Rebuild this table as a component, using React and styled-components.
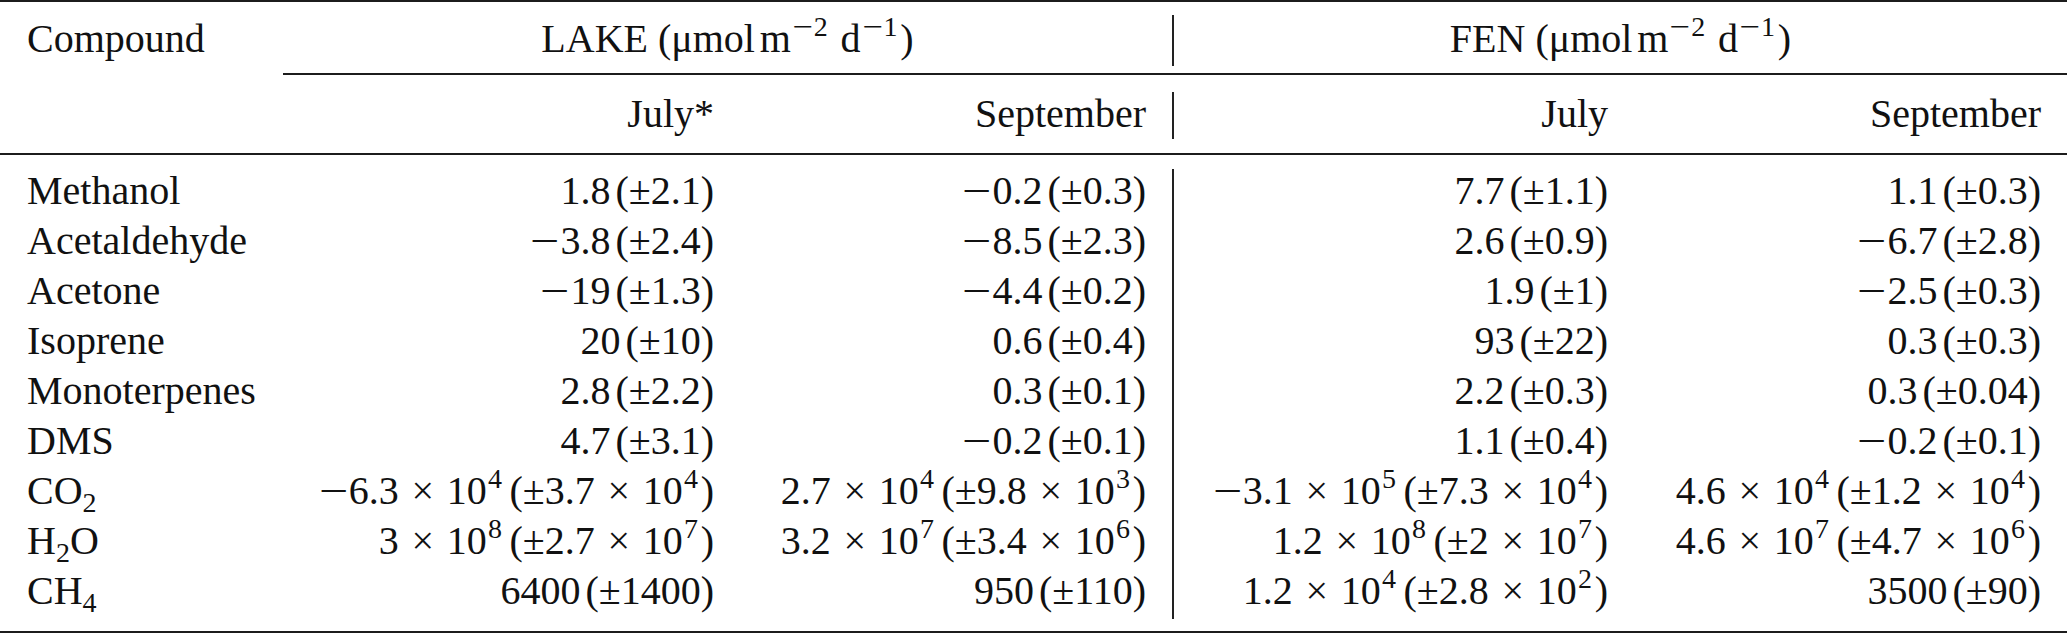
import React from "react";
import styled, { createGlobalStyle } from "styled-components";

const Global = createGlobalStyle`
  html, body { margin: 0; padding: 0; background: #fff; overflow: hidden; }
  body { font-family: "Liberation Serif", serif; color: #111; }
`;

const COLS = "283px 457px 432px 2px 460px 433px";

const Table = styled.div`
  width: 2067px;
  display: flex;
  flex-direction: column;
  font-family: "Liberation Serif", serif;
  font-size: 40px;
  line-height: 50px;
  color: #111;
`;

const Rule = styled.div`
  height: ${(p) => p.$h || 2}px;
  background: #1c1c1c;
  margin-left: ${(p) => p.$indent || 0}px;
`;

const HeadRow = styled.div`
  display: grid;
  grid-template-columns: ${COLS};
  height: ${(p) => p.$height}px;
  padding-top: ${(p) => p.$pt}px;
  box-sizing: border-box;
`;

const Body = styled.div`
  display: grid;
  grid-template-columns: ${COLS};
  grid-auto-rows: 50px;
  padding: 11px 0 15px;
`;

const NameCell = styled.div`
  padding-left: 27px;
  white-space: nowrap;
`;

const NumCell = styled.div`
  text-align: right;
  padding-right: 26px;
  white-space: nowrap;
`;

const SpanHead = styled.div`
  grid-column: ${(p) => p.$cols};
  text-align: center;
  white-space: nowrap;
`;

const Divider = styled.div`
  grid-column: 4;
  grid-row: ${(p) => p.$rows || "auto"};
  background: #222;
  margin-top: ${(p) => p.$mt}px;
  margin-bottom: ${(p) => p.$mb}px;
`;

const Sup = styled.span`
  font-size: 0.7em;
  vertical-align: 0.58em;
  line-height: 0;
  margin-left: 0.04em;
  margin-right: 0.1em;
`;

const Sub = styled.span`
  font-size: 0.7em;
  vertical-align: -0.3em;
  line-height: 0;
`;

const Gap = styled.span`
  display: inline-block;
  width: ${(p) => p.$w}em;
`;

const Minus = styled.span`
  display: inline-block;
  width: 0.78em;
  text-align: center;
  transform: scaleX(1.3);
`;

const Times = styled.span`
  display: inline-block;
  width: 1.2em;
  text-align: center;
`;

function Rich({ text }) {
  const parts = text.split(/(\^[\u2212\d]+|_\d+|~|\u2212|×)/);
  return (
    <>
      {parts.map((p, i) => {
        if (p === "~") return <Gap key={i} $w={0.12} />;
        if (p === "\u2212") return <Minus key={i}>{"\u2212"}</Minus>;
        if (p === "×") return <Times key={i}>×</Times>;
        if (p.startsWith("^")) {
          const s = p.slice(1);
          return (
            <Sup key={i}>
              {s.startsWith("\u2212") ? (
                <>
                  <Minus>{"\u2212"}</Minus>
                  {s.slice(1)}
                </>
              ) : (
                s
              )}
            </Sup>
          );
        }
        if (p.startsWith("_")) return <Sub key={i}>{p.slice(1)}</Sub>;
        return <React.Fragment key={i}>{p}</React.Fragment>;
      })}
    </>
  );
}

const M = "\u2212";

const rows = [
  ["Methanol", `1.8~(±2.1)`, `${M}0.2~(±0.3)`, `7.7~(±1.1)`, `1.1~(±0.3)`],
  ["Acetaldehyde", `${M}3.8~(±2.4)`, `${M}8.5~(±2.3)`, `2.6~(±0.9)`, `${M}6.7~(±2.8)`],
  ["Acetone", `${M}19~(±1.3)`, `${M}4.4~(±0.2)`, `1.9~(±1)`, `${M}2.5~(±0.3)`],
  ["Isoprene", `20~(±10)`, `0.6~(±0.4)`, `93~(±22)`, `0.3~(±0.3)`],
  ["Monoterpenes", `2.8~(±2.2)`, `0.3~(±0.1)`, `2.2~(±0.3)`, `0.3~(±0.04)`],
  ["DMS", `4.7~(±3.1)`, `${M}0.2~(±0.1)`, `1.1~(±0.4)`, `${M}0.2~(±0.1)`],
  ["CO_2", `${M}6.3×10^4~(±3.7×10^4)`, `2.7×10^4~(±9.8×10^3)`, `${M}3.1×10^5~(±7.3×10^4)`, `4.6×10^4~(±1.2×10^4)`],
  ["H_2O", `3×10^8~(±2.7×10^7)`, `3.2×10^7~(±3.4×10^6)`, `1.2×10^8~(±2×10^7)`, `4.6×10^7~(±4.7×10^6)`],
  ["CH_4", `6400~(±1400)`, `950~(±110)`, `1.2×10^4~(±2.8×10^2)`, `3500~(±90)`],
];

export default function App() {
  const unit = ` (μmol~m^${M}2 d^${M}1)`;
  return (
    <>
      <Global />
      <Table>
        <Rule $h={2} />
        <HeadRow $height={71} $pt={12}>
          <NameCell>Compound</NameCell>
          <SpanHead $cols="2 / 4">
            <Rich text={`LAKE${unit}`} />
          </SpanHead>
          <Divider $mt={1} $mb={7} />
          <SpanHead $cols="5 / 7">
            <Rich text={`FEN${unit}`} />
          </SpanHead>
        </HeadRow>
        <Rule $h={2} $indent={283} />
        <HeadRow $height={78} $pt={14}>
          <NameCell />
          <NumCell>July*</NumCell>
          <NumCell>September</NumCell>
          <Divider $mt={3} $mb={14} />
          <NumCell>July</NumCell>
          <NumCell>September</NumCell>
        </HeadRow>
        <Rule $h={2} />
        <Body>
          {rows.map((r, i) => (
            <React.Fragment key={r[0]}>
              <NameCell style={{ gridRow: i + 1, gridColumn: 1 }}>
                <Rich text={r[0]} />
              </NameCell>
              <NumCell style={{ gridRow: i + 1, gridColumn: 2 }}>
                <Rich text={r[1]} />
              </NumCell>
              <NumCell style={{ gridRow: i + 1, gridColumn: 3 }}>
                <Rich text={r[2]} />
              </NumCell>
              <NumCell style={{ gridRow: i + 1, gridColumn: 5 }}>
                <Rich text={r[3]} />
              </NumCell>
              <NumCell style={{ gridRow: i + 1, gridColumn: 6 }}>
                <Rich text={r[4]} />
              </NumCell>
            </React.Fragment>
          ))}
          <Divider $rows="1 / 10" $mt={3} $mb={-3} />
        </Body>
        <Rule $h={2} />
      </Table>
    </>
  );
}
